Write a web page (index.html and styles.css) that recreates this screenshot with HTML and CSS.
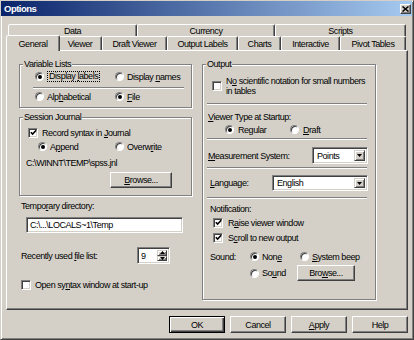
FILE: index.html
```html
<!DOCTYPE html>
<html lang="en">
<head>
<meta charset="utf-8">
<title>Options</title>
<link rel="stylesheet" href="styles.css">
</head>
<body>
<div class="dialog">
  <div class="titlebar">
    <span class="title">Options</span>
    <span class="close"><svg width="7" height="6" viewBox="0 0 7 6"><path d="M0.5 0.5 L6.5 5.5 M6.5 0.5 L0.5 5.5" stroke="#000" stroke-width="1.5"/></svg></span>
  </div>

  <div class="tabstrip">
    <div class="tabrow back">
      <div class="tab t-data">Data</div>
      <div class="tab t-currency">Currency</div>
      <div class="tab t-scripts">Scripts</div>
    </div>
    <div class="tabrow front">
      <div class="tab sel t-general">General</div>
      <div class="tab t-viewer">Viewer</div>
      <div class="tab t-draft">Draft Viewer</div>
      <div class="tab t-outlabels">Output Labels</div>
      <div class="tab t-charts">Charts</div>
      <div class="tab t-inter">Interactive</div>
      <div class="tab t-pivot">Pivot Tables</div>
    </div>
  </div>

  <div class="panel">
    <div class="col col-left">
      <div class="group g-vars">
        <span class="legend">Variable Lists</span>
        <div class="row r-vars">
          <div class="opt o-wide"><span class="rb on"></span><span class="focus">Display <u>l</u>abels</span></div>
          <div class="opt"><span class="rb"></span><span>Display <u>n</u>ames</span></div>
        </div>
        <div class="sep s-vars"></div>
        <div class="row r-vars">
          <div class="opt o-wide"><span class="rb"></span><span>Alp<u>h</u>abetical</span></div>
          <div class="opt"><span class="rb on"></span><span><u>F</u>ile</span></div>
        </div>
      </div>

      <div class="group g-journal">
        <span class="legend">Session Journal</span>
        <div class="row r-record">
          <div class="opt"><span class="cb on"><svg width="7" height="7" viewBox="0 0 7 7"><path d="M0.8 3.2 L2.6 5.1 L6.2 1.3" fill="none" stroke="#000" stroke-width="1.6"/></svg></span><span>Record syntax in <u>J</u>ournal</span></div>
        </div>
        <div class="row r-mode">
          <div class="opt o-mode"><span class="rb on"></span><span>A<u>p</u>pend</span></div>
          <div class="opt"><span class="rb"></span><span>Overw<u>r</u>ite</span></div>
        </div>
        <div class="path">C:\WINNT\TEMP\spss.jnl</div>
        <div class="btn b-browse-l"><span><u>B</u>rowse...</span></div>
      </div>

      <div class="plain-label l-temp">Tempo<u>r</u>ary directory:</div>
      <div class="field f-temp">C:\...\LOCALS~1\Temp</div>

      <div class="row r-recent">
        <span class="recent-label">Recently used <u>f</u>ile list:</span>
        <div class="spin">
          <span class="spin-val">9</span>
          <span class="spin-btns">
            <span class="spin-btn"><svg width="5" height="3" viewBox="0 0 5 3"><path d="M2.5 0 L5 3 L0 3 Z" fill="#000"/></svg></span>
            <span class="spin-btn"><svg width="5" height="3" viewBox="0 0 5 3"><path d="M0 0 L5 0 L2.5 3 Z" fill="#000"/></svg></span>
          </span>
        </div>
      </div>

      <div class="row r-open">
        <div class="opt"><span class="cb"></span><span>Open sy<u>n</u>tax window at start-up</span></div>
      </div>
    </div>

    <div class="col col-right">
      <div class="group g-output">
        <span class="legend">Output</span>
        <div class="row r-sci">
          <div class="opt o-sci"><span class="cb"></span><span class="sci-text">N<u>o</u> scientific notation for small numbers<br>in tables</span></div>
        </div>
        <div class="sep s-out s-1"></div>
        <div class="plain-label l-viewer"><u>V</u>iewer Type at Startup:</div>
        <div class="row r-viewer">
          <div class="opt o-regular"><span class="rb on"></span><span>Regular</span></div>
          <div class="opt"><span class="rb"></span><span><u>D</u>raft</span></div>
        </div>
        <div class="sep s-out s-2"></div>
        <div class="row r-measure">
          <span><u>M</u>easurement System:</span>
          <div class="combo c-points"><span class="combo-val">Points</span><span class="combo-btn"><svg width="5" height="3" viewBox="0 0 5 3"><path d="M0 0 L5 0 L2.5 3 Z" fill="#000"/></svg></span></div>
        </div>
        <div class="sep s-out s-3"></div>
        <div class="row r-lang">
          <span><u>L</u>anguage:</span>
          <div class="combo c-lang"><span class="combo-val">English</span><span class="combo-btn"><svg width="5" height="3" viewBox="0 0 5 3"><path d="M0 0 L5 0 L2.5 3 Z" fill="#000"/></svg></span></div>
        </div>
        <div class="sep s-out s-4"></div>
        <div class="plain-label l-notif">Notification:</div>
        <div class="row r-notif r-n1">
          <div class="opt o-notif"><span class="cb on"><svg width="7" height="7" viewBox="0 0 7 7"><path d="M0.8 3.2 L2.6 5.1 L6.2 1.3" fill="none" stroke="#000" stroke-width="1.6"/></svg></span><span>R<u>a</u>ise viewer window</span></div>
        </div>
        <div class="row r-notif r-n2">
          <div class="opt o-notif"><span class="cb on"><svg width="7" height="7" viewBox="0 0 7 7"><path d="M0.8 3.2 L2.6 5.1 L6.2 1.3" fill="none" stroke="#000" stroke-width="1.6"/></svg></span><span>S<u>c</u>roll to new output</span></div>
        </div>
        <div class="sound">
          <span class="sound-label">Sound:</span>
          <div class="opt"><span class="rb on"></span><span>Non<u>e</u></span></div>
          <div class="opt o-beep"><span class="rb"></span><span><u>S</u>ystem beep</span></div>
          <span></span>
          <div class="opt"><span class="rb"></span><span>So<u>u</u>nd</span></div>
          <div class="btn b-browse-r"><span>Bro<u>w</u>se...</span></div>
        </div>
      </div>
    </div>
  </div>

  <div class="buttons">
    <div class="btn b-main default">OK</div>
    <div class="btn b-main">Cancel</div>
    <div class="btn b-main"><span><u>A</u>pply</span></div>
    <div class="btn b-main">Help</div>
  </div>
</div>
</body>
</html>
```

FILE: styles.css
```css
* { box-sizing: border-box; }
html, body { margin: 0; padding: 0; }
body {
  background: #d4d0c8;
  font-family: "Liberation Sans", Arial, sans-serif;
  font-size: 9px;
  letter-spacing: -0.45px;
  line-height: 10px;
  color: #000;
}
u { text-decoration: underline; text-underline-offset: 1px; text-decoration-thickness: 1px; }
svg { display: block; }

/* window */
.dialog {
  width: 414px;
  height: 340px;
  border: 1px solid;
  border-color: #d4d0c8 #404040 #404040 #d4d0c8;
  box-shadow: inset 1px 1px #fff, inset -1px -1px #808080;
  background: #d4d0c8;
  display: flex;
  flex-direction: column;
}
.titlebar {
  height: 15px;
  margin-right: 1px;
  background: linear-gradient(to right, #0a246a, #a6caf0);
  display: flex;
  align-items: center;
  justify-content: space-between;
  padding: 0 1px 0 3px;
}
.title { color: #fff; font-weight: bold; font-size: 9.5px; letter-spacing: -0.5px; }
.close {
  width: 11px;
  height: 10px;
  background: #d4d0c8;
  border: 1px solid;
  border-color: #fff #404040 #404040 #fff;
  box-shadow: inset -1px -1px #808080;
  display: flex;
  align-items: center;
  justify-content: center;
}

/* tabs */
.tabstrip { margin: 8px 0 0 7px; }
.tabrow { display: flex; }
.tabrow.back { height: 12px; }
.tabrow.front { height: 14px; align-items: flex-end; }
.tab {
  height: 100%;
  flex: none;
  border: 1px solid;
  border-bottom: none;
  border-color: #fff #404040 transparent #fff;
  box-shadow: inset -1px 0 #808080;
  border-radius: 2px 2px 0 0;
  background: #d4d0c8;
  display: flex;
  align-items: center;
  justify-content: center;
}
.tab.sel {
  height: 16px;
  margin: 0 -2px -1px;
  position: relative;
  z-index: 1;
}
.t-data { width: 129px; }
.t-currency { width: 138px; }
.t-scripts { width: 131px; }
.t-general { width: 54px; }
.t-viewer { width: 44px; }
.t-draft { width: 65px; }
.t-outlabels { width: 71px; }
.t-charts { width: 43px; }
.t-inter { width: 59px; }
.t-pivot { width: 66px; }

/* panel */
.panel {
  margin-left: 5px;
  width: 402px;
  height: 260px;
  border: 1px solid;
  border-color: #fff #404040 #404040 #fff;
  box-shadow: inset -1px -1px #808080;
  display: flex;
  gap: 10px;
  padding: 13px 0 0 12px;
}
.col { display: flex; flex-direction: column; }
.col-left { width: 173px; }
.col-right { width: 174px; }

.group {
  position: relative;
  display: flex;
  flex-direction: column;
  border: 1px solid #808080;
  box-shadow: inset 1px 1px #fff, 1px 1px #fff;
}
.legend {
  position: absolute;
  top: -6px;
  left: 3px;
  padding: 0 1px;
  background: #d4d0c8;
  line-height: 10px;
  white-space: nowrap;
}
.sep {
  height: 2px;
  border-top: 1px solid #808080;
  border-bottom: 1px solid #fff;
}
.row { display: flex; align-items: center; }
.opt { display: flex; align-items: center; gap: 3px; white-space: nowrap; }

/* radio / checkbox */
.rb {
  flex: none;
  width: 9px;
  height: 9px;
  border-radius: 50%;
  background: #fff;
  border: 1px solid;
  border-color: #808080 #fff #fff #808080;
  box-shadow: inset 1px 1px #404040;
  display: flex;
  align-items: center;
  justify-content: center;
}
.rb.on::after {
  content: "";
  width: 4px;
  height: 4px;
  border-radius: 50%;
  background: #000;
}
.cb {
  flex: none;
  width: 10px;
  height: 10px;
  background: #fff;
  border: 1px solid;
  border-color: #808080 #fff #fff #808080;
  box-shadow: inset 1px 1px #404040, inset -1px -1px #d4d0c8;
  display: flex;
  align-items: center;
  justify-content: center;
}
.focus {
  border: 1px dotted #000;
  line-height: 9px;
  padding: 0 1px 0 1px;
}

/* buttons */
.btn {
  flex: none;
  background: #d4d0c8;
  border: 1px solid;
  border-color: #fff #404040 #404040 #fff;
  box-shadow: inset -1px -1px #808080;
  display: flex;
  align-items: center;
  justify-content: center;
}
.btn.default {
  border-color: #000;
  box-shadow: inset 1px 1px #fff, inset -1px -1px #404040, inset -2px -2px #808080;
}

/* fields */
.field, .spin, .combo {
  background: #fff;
  border: 1px solid;
  border-color: #808080 #fff #fff #808080;
  box-shadow: inset 1px 1px #404040, inset -1px -1px #d4d0c8;
}

/* left column: Variable Lists */
.g-vars { padding: 6px 0 5px; }
.r-vars { height: 11px; padding-left: 15px; }
.o-wide { width: 80px; }
.s-vars { margin: 5px 7px 2px 13px; }

/* Session Journal */
.g-journal { margin-top: 9px; padding: 9px 0 7px; }
.r-record { height: 11px; padding-left: 8px; }
.r-record .opt { gap: 4px; }
.r-mode { height: 11px; margin-top: 3px; padding-left: 18px; }
.o-mode { width: 77px; }
.path { margin-top: 6px; padding-left: 6px; height: 11px; line-height: 11px; }
.b-browse-l { margin: 3px 0 0 90px; width: 62px; height: 16px; }

.plain-label { height: 10px; white-space: nowrap; }
.l-temp { margin: 5px 0 0 2px; }
.f-temp {
  margin: 6px 0 0 7px;
  width: 157px;
  height: 16px;
  padding: 0 3px;
  display: flex;
  align-items: center;
}
.r-recent { margin-top: 14px; height: 17px; }
.recent-label { width: 118px; padding-left: 2px; }
.spin { width: 33px; height: 17px; display: flex; padding: 2px; }
.spin-val { flex: 1; padding-left: 1px; line-height: 12px; }
.spin-btns { width: 10px; display: flex; flex-direction: column; }
.spin-btn {
  flex: 1;
  background: #d4d0c8;
  border: 1px solid;
  border-color: #d4d0c8 #404040 #404040 #d4d0c8;
  box-shadow: inset 1px 1px #fff, inset -1px -1px #808080;
  display: flex;
  align-items: center;
  justify-content: center;
}
.r-open { margin-top: 15px; height: 11px; padding-left: 2px; }
.r-open .opt { gap: 4px; }

/* right column: Output */
.g-output { padding: 11px 0 18px; }
.r-sci { padding-left: 9px; }
.o-sci { gap: 4px; }
.s-out { margin-left: 4px; margin-right: 8px; }
.s-1 { margin-top: 7px; }
.l-viewer { margin-top: 7px; padding-left: 5px; }
.r-viewer { height: 11px; margin-top: 2px; padding-left: 22px; }
.o-regular { width: 65px; }
.r-viewer .opt { gap: 4px; }
.s-2 { margin-top: 3px; }
.r-measure { margin-top: 7px; height: 17px; padding: 0 7px 0 5px; justify-content: space-between; }
.s-3 { margin-top: 3px; }
.r-lang { margin-top: 6px; height: 16px; padding: 0 7px 0 7px; justify-content: space-between; }
.s-4 { margin-top: 6px; }
.combo { height: 100%; display: flex; padding: 2px; }
.c-points { width: 56px; }
.c-lang { width: 96px; }
.combo-val { flex: 1; padding-left: 2px; display: flex; align-items: center; }
.combo-btn {
  width: 11px;
  background: #d4d0c8;
  border: 1px solid;
  border-color: #d4d0c8 #404040 #404040 #d4d0c8;
  box-shadow: inset 1px 1px #fff, inset -1px -1px #808080;
  display: flex;
  align-items: center;
  justify-content: center;
}
.l-notif { margin-top: 5px; padding-left: 7px; }
.r-notif { height: 11px; padding-left: 10px; }
.o-notif { gap: 5px; }
.r-n1 { margin-top: 3px; }
.r-n2 { margin-top: 4px; }
.sound {
  margin-top: 8px;
  padding-left: 7px;
  display: grid;
  grid-template-columns: 40px 47px auto;
  grid-template-rows: 11px 16px;
  row-gap: 3px;
  align-items: center;
}
.o-beep { padding-left: 3px; }
.b-browse-r { width: 58px; height: 16px; }

/* dialog buttons */
.buttons {
  display: flex;
  justify-content: flex-end;
  gap: 5px;
  margin: 6px 5px 0 0;
}
.b-main { width: 56px; height: 17px; }
```
